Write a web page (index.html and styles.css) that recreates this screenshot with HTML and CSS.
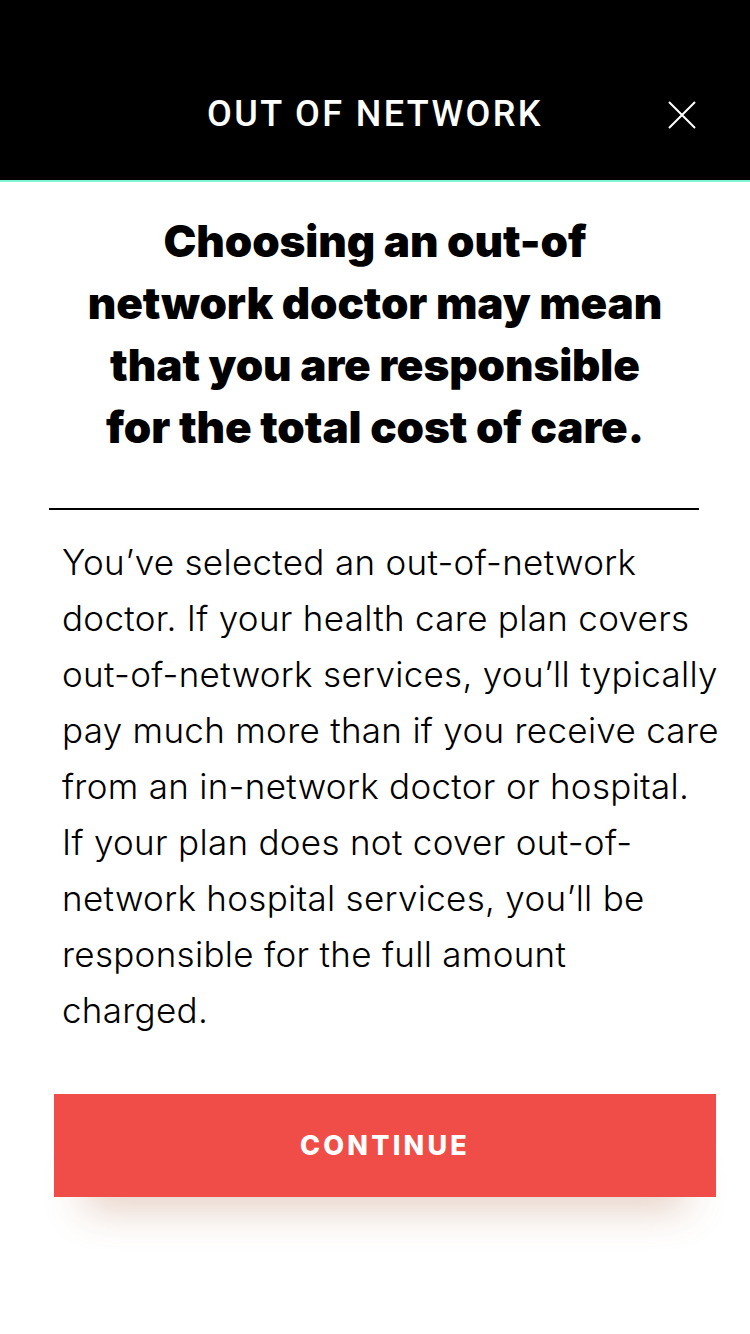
FILE: index.html
```html
<!DOCTYPE html>
<html>
<head>
<meta charset="utf-8">
<link rel="stylesheet" href="styles.css">
</head>
<body>
<header class="topbar">
  <h1 class="title">OUT OF NETWORK</h1>
  <button class="close" aria-label="Close">
    <svg width="28" height="28" viewBox="0 0 28 28"><path d="M1 1L27 27M27 1L1 27" stroke="#fff" stroke-width="2" fill="none"/></svg>
  </button>
</header>
<main class="content">
  <h2 class="headline">Choosing an out-of<br>network doctor may mean<br>that you are responsible<br>for the total cost of care.</h2>
  <hr class="divider">
  <p class="body">You’ve selected an out-of-network<br>doctor. If your health care plan covers<br>out-of-network services, you’ll typically<br>pay much more than if you receive care<br>from an in-network doctor or hospital.<br>If your plan does not cover out-of-<br>network hospital services, you’ll be<br>responsible for the full amount<br>charged.</p>
  <div class="actions">
    <button class="continue">CONTINUE</button>
  </div>
</main>
</body>
</html>
```
FILE: styles.css
```css
* { box-sizing: border-box; }
html, body { margin: 0; padding: 0; background: #fff; }
body { width: 750px; height: 1334px; font-family: Inter, Roboto, "Liberation Sans", sans-serif; color: #000; }
.topbar {
  height: 182px;
  background: #000;
  border-bottom: 2px solid #7ff5d6;
  display: flex;
  align-items: center;
  justify-content: center;
  position: relative;
  padding-top: 48px;
}
.title {
  margin: 0;
  color: #fff;
  font-family: Roboto, "Liberation Sans", sans-serif;
  font-size: 36px;
  font-weight: 500;
  letter-spacing: 2.4px;
  line-height: 40px;
}
.close {
  position: absolute;
  right: 54px;
  top: 101px;
  background: none;
  border: 0;
  padding: 0;
  width: 28px;
  height: 28px;
  display: block;
}
.close svg { display: block; }
.content { display: flex; flex-direction: column; align-items: center; }
.headline {
  margin: 28px 0 0 0;
  font-family: Inter, "Open Sans", sans-serif;
  font-size: 44px;
  font-weight: 900;
  line-height: 62px;
  text-align: center;
  letter-spacing: -0.1px;
}
.divider {
  width: 650px;
  margin: 50px 0 0 49px;
  border: 0;
  border-top: 2px solid #000;
  align-self: flex-start;
}
.body {
  margin: 24px 0 0 0;
  padding: 0 8px 0 62px;
  font-family: Inter, "Open Sans", sans-serif;
  font-size: 35px;
  font-weight: 300;
  line-height: 56px;
  letter-spacing: 0.3px;
  align-self: stretch;
}
.actions { align-self: stretch; padding: 0 34px 0 54px; margin-top: 56px; }
.continue {
  width: 100%;
  height: 103px;
  background: #f04d49;
  color: #fff;
  border: 0;
  font-family: Inter, Roboto, sans-serif;
  font-weight: 800;
  font-size: 27px;
  letter-spacing: 3.2px;
  box-shadow: 0 42px 40px -30px rgba(170, 100, 60, 0.32);
}
```
